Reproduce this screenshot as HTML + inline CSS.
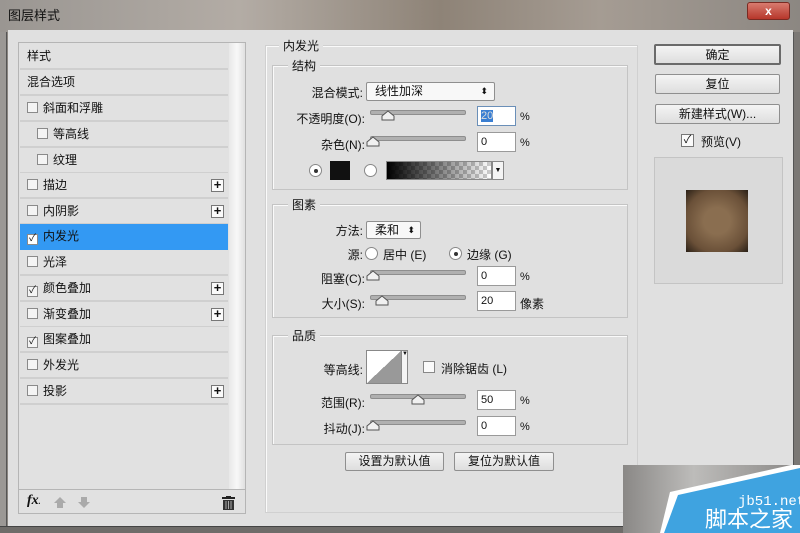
<!DOCTYPE html>
<html><head><meta charset="utf-8">
<style>
*{box-sizing:border-box;margin:0;padding:0}
body{width:800px;height:533px;overflow:hidden;position:relative;background:#8a8580;font-family:"Liberation Sans","Noto Sans CJK SC",sans-serif;font-size:12px;color:#111}
.a{position:absolute}
.row{position:absolute;left:20px;width:208px;height:26px;border-bottom:2px solid #cfcfcf;line-height:24px;padding-left:7px;font-size:12px;background:#e1e1e1}
.cb{display:inline-block;width:11px;height:11px;border:1px solid #8a8a8a;background:#f4f4f4;vertical-align:-1px;margin-right:5px;font-size:10px;line-height:8px;text-align:center}
.plus{position:absolute;right:4px;top:6px;width:13px;height:13px;border:1px solid #777;background:#fafafa;font-size:13px;line-height:10px;text-align:center;font-weight:bold}
.grp{position:absolute;border:1px solid #c4c4c4;box-shadow:1px 1px 0 #fafafa inset}
.lg{position:absolute;background:#e0e0e0;padding:0 4px;font-size:12px}
.lbl{position:absolute;text-align:right;font-size:12px}
.inp{position:absolute;width:39px;height:20px;background:#fff;border:1px solid #9a9a9a;font-size:11px;line-height:18px;padding-left:3px}
.trk{position:absolute;width:96px;height:5px;background:#b0b0b0;border:1px solid #8e8e8e;border-radius:2px}
.th{position:absolute}
.btn{position:absolute;border:1px solid #8f8f8f;background:linear-gradient(#f4f4f4,#dedede);text-align:center;font-size:12px;border-radius:2px}
.pct{position:absolute;font-size:11px}
</style></head><body>
<div class="a" style="left:0;top:0;width:800px;height:32px;background:linear-gradient(90deg,#9a9692 0%,#b3aca5 30%,#8e8377 55%,#a59c93 75%,#8c8782 100%)"></div>
<div class="a" style="left:8px;top:5px;font-size:13px;color:#111">图层样式</div>
<div class="a" style="left:747px;top:2px;width:43px;height:18px;background:linear-gradient(#d87b6f,#b7372b);border:1px solid #7a2a22;border-radius:3px;color:#fff;text-align:center;font-weight:bold;line-height:16px;font-size:12px">x</div>
<div class="a" style="left:0;top:32px;width:7px;height:501px;background:#9b9895;border-right:1px solid #555"></div>
<div class="a" style="left:793px;top:32px;width:7px;height:501px;background:#7b7875;border-left:1px solid #555"></div>
<div class="a" style="left:8px;top:30px;width:785px;height:496px;background:#e0e0e0"></div>
<div class="a" style="left:0;top:526px;width:800px;height:7px;background:#6f6c69;border-top:1px solid #444"></div>

<div class="a" style="left:18px;top:42px;width:228px;height:472px;border:1px solid #b5b5b5;background:#e1e1e1"></div>
<div class="a" style="left:229px;top:43px;width:16px;height:446px;background:linear-gradient(90deg,#e8e8e8,#f8f8f8,#e0e0e0)"></div>
<div class="row" style="top:44px">样式</div>
<div class="row" style="top:70px">混合选项</div>
<div class="row" style="top:96px"><span class="cb"></span>斜面和浮雕</div>
<div class="row" style="top:122px;padding-left:17px"><span class="cb"></span>等高线</div>
<div class="row" style="top:148px;padding-left:17px"><span class="cb"></span>纹理</div>
<div class="row" style="top:173px"><span class="cb"></span>描边<span class="plus">+</span></div>
<div class="row" style="top:199px"><span class="cb"></span>内阴影<span class="plus">+</span></div>
<div class="row" style="top:224px;background:#3399f3;border-bottom-color:#3399f3"><span class="cb" style="background:#fff">✓</span>内发光</div>
<div class="row" style="top:250px"><span class="cb"></span>光泽</div>
<div class="row" style="top:276px"><span class="cb">✓</span>颜色叠加<span class="plus">+</span></div>
<div class="row" style="top:302px"><span class="cb"></span>渐变叠加<span class="plus">+</span></div>
<div class="row" style="top:327px"><span class="cb">✓</span>图案叠加</div>
<div class="row" style="top:353px"><span class="cb"></span>外发光</div>
<div class="row" style="top:379px"><span class="cb"></span>投影<span class="plus">+</span></div>
<div class="a" style="left:19px;top:489px;width:226px;height:1px;background:#b5b5b5"></div>
<div class="a" style="left:27px;top:493px;font-style:italic;font-weight:bold;font-family:'Liberation Serif',serif;font-size:14px">fx<span style="font-size:8px">.</span></div>
<div class="a" style="left:54px;top:497px;width:0;height:0;border:6px solid transparent;border-bottom-color:#aaa;border-top:0"></div>
<div class="a" style="left:57px;top:503px;width:6px;height:5px;background:#aaa"></div>
<div class="a" style="left:81px;top:497px;width:6px;height:5px;background:#aaa"></div>
<div class="a" style="left:78px;top:502px;width:0;height:0;border:6px solid transparent;border-top-color:#aaa;border-bottom:0"></div>
<svg class="a" style="left:222px;top:496px" width="13" height="14"><rect x="0" y="1" width="13" height="2" fill="#222"/><rect x="4" y="0" width="5" height="2" fill="#222"/><rect x="1" y="4" width="11" height="10" fill="#333"/><path d="M4 5v8M6.5 5v8M9 5v8" stroke="#aaa"/></svg>

<div class="grp" style="left:265px;top:45px;width:373px;height:468px;border-color:#d0d0d0"></div>
<div class="lg" style="left:279px;top:37px">内发光</div>
<div class="grp" style="left:272px;top:65px;width:356px;height:125px"></div>
<div class="lg" style="left:288px;top:57px">结构</div>
<div class="lbl" style="left:280px;width:83px;top:84px">混合模式:</div>
<div class="btn" style="left:366px;top:82px;width:129px;height:19px;background:#f8f8f8;text-align:left;padding-left:8px;line-height:17px">线性加深<span style="position:absolute;right:6px;font-size:9px">⬍</span></div>
<div class="lbl" style="left:280px;width:85px;top:110px">不透明度(O):</div>
<div class="trk" style="left:370px;top:110px"></div>
<svg class="th" style="left:381px;top:110px" width="14" height="11"><path d="M1 10V6L7 1L13 6V10Z" fill="#f0f0f0" stroke="#555"/></svg>
<div class="inp" style="left:477px;top:106px;border-color:#6a8fb8"><span style="background:#3a7fd2;color:#ddd">20</span></div>
<div class="pct" style="left:520px;top:111px">%</div>
<div class="lbl" style="left:280px;width:85px;top:136px">杂色(N):</div>
<div class="trk" style="left:370px;top:136px"></div>
<svg class="th" style="left:366px;top:136px" width="14" height="11"><path d="M1 10V6L7 1L13 6V10Z" fill="#f0f0f0" stroke="#555"/></svg>
<div class="inp" style="left:477px;top:132px">0</div>
<div class="pct" style="left:520px;top:137px">%</div>
<div class="a" style="left:309px;top:164px;width:13px;height:13px;border:1px solid #888;border-radius:50%;background:#fff"></div>
<div class="a" style="left:314px;top:169px;width:4px;height:4px;border-radius:50%;background:#333"></div>
<div class="a" style="left:330px;top:161px;width:20px;height:19px;background:#111"></div>
<div class="a" style="left:364px;top:164px;width:13px;height:13px;border:1px solid #888;border-radius:50%;background:#fff"></div>
<div class="a" style="left:386px;top:161px;width:106px;height:19px;border:1px solid #888;background:linear-gradient(90deg,#000,rgba(0,0,0,0)),repeating-conic-gradient(#ccc 0 25%,#fff 0 50%) 0 0/8px 8px"></div>
<div class="a" style="left:492px;top:161px;width:12px;height:19px;border:1px solid #888;background:#f4f4f4;font-size:7px;text-align:center;line-height:17px">▼</div>

<div class="grp" style="left:272px;top:204px;width:356px;height:114px"></div>
<div class="lg" style="left:288px;top:196px">图素</div>
<div class="lbl" style="left:280px;width:83px;top:222px">方法:</div>
<div class="btn" style="left:366px;top:221px;width:55px;height:18px;background:#f8f8f8;text-align:left;padding-left:8px;line-height:16px">柔和<span style="position:absolute;right:5px;font-size:9px">⬍</span></div>
<div class="lbl" style="left:280px;width:83px;top:246px">源:</div>
<div class="a" style="left:365px;top:247px;width:13px;height:13px;border:1px solid #888;border-radius:50%;background:#fff"></div>
<div class="a" style="left:383px;top:246px">居中 (E)</div>
<div class="a" style="left:449px;top:247px;width:13px;height:13px;border:1px solid #888;border-radius:50%;background:#fff"></div>
<div class="a" style="left:454px;top:252px;width:4px;height:4px;border-radius:50%;background:#333"></div>
<div class="a" style="left:467px;top:246px">边缘 (G)</div>
<div class="lbl" style="left:280px;width:85px;top:270px">阻塞(C):</div>
<div class="trk" style="left:370px;top:270px"></div>
<svg class="th" style="left:366px;top:270px" width="14" height="11"><path d="M1 10V6L7 1L13 6V10Z" fill="#f0f0f0" stroke="#555"/></svg>
<div class="inp" style="left:477px;top:266px">0</div>
<div class="pct" style="left:520px;top:271px">%</div>
<div class="lbl" style="left:280px;width:85px;top:295px">大小(S):</div>
<div class="trk" style="left:370px;top:295px"></div>
<svg class="th" style="left:375px;top:295px" width="14" height="11"><path d="M1 10V6L7 1L13 6V10Z" fill="#f0f0f0" stroke="#555"/></svg>
<div class="inp" style="left:477px;top:291px">20</div>
<div class="a" style="left:520px;top:295px">像素</div>

<div class="grp" style="left:272px;top:335px;width:356px;height:110px"></div>
<div class="lg" style="left:288px;top:327px">品质</div>
<div class="lbl" style="left:280px;width:83px;top:361px">等高线:</div>
<div class="a" style="left:366px;top:350px;width:36px;height:34px;border:1px solid #888;background:linear-gradient(to bottom right,#fff 50%,#999 50%)"></div>
<div class="a" style="left:401px;top:350px;width:7px;height:34px;border:1px solid #888;background:#f4f4f4;font-size:6px">▼</div>
<div class="a" style="left:423px;top:361px;width:12px;height:12px;border:1px solid #888;background:#fafafa"></div>
<div class="a" style="left:441px;top:360px">消除锯齿 (L)</div>
<div class="lbl" style="left:280px;width:85px;top:394px">范围(R):</div>
<div class="trk" style="left:370px;top:394px"></div>
<svg class="th" style="left:411px;top:394px" width="14" height="11"><path d="M1 10V6L7 1L13 6V10Z" fill="#f0f0f0" stroke="#555"/></svg>
<div class="inp" style="left:477px;top:390px">50</div>
<div class="pct" style="left:520px;top:395px">%</div>
<div class="lbl" style="left:280px;width:85px;top:420px">抖动(J):</div>
<div class="trk" style="left:370px;top:420px"></div>
<svg class="th" style="left:366px;top:420px" width="14" height="11"><path d="M1 10V6L7 1L13 6V10Z" fill="#f0f0f0" stroke="#555"/></svg>
<div class="inp" style="left:477px;top:416px">0</div>
<div class="pct" style="left:520px;top:421px">%</div>
<div class="btn" style="left:345px;top:452px;width:99px;height:19px;line-height:17px">设置为默认值</div>
<div class="btn" style="left:454px;top:452px;width:100px;height:19px;line-height:17px">复位为默认值</div>

<div class="btn" style="left:654px;top:44px;width:127px;height:21px;line-height:19px;border:2px solid #6a6a6a">确定</div>
<div class="btn" style="left:655px;top:74px;width:125px;height:20px;line-height:18px">复位</div>
<div class="btn" style="left:655px;top:104px;width:125px;height:20px;line-height:18px">新建样式(W)...</div>
<div class="a" style="left:681px;top:134px;width:13px;height:13px;border:1px solid #777;background:#fafafa;font-size:11px;line-height:11px;text-align:center">✓</div>
<div class="a" style="left:701px;top:133px">预览(V)</div>
<div class="a" style="left:654px;top:157px;width:129px;height:127px;border:1px solid #c4c4c4;background:#dadada"></div>
<div class="a" style="left:686px;top:190px;width:62px;height:62px;background:radial-gradient(#8a6e50 30%,#6a5038 72%,#2a2016 100%)"></div>

<div class="a" style="left:623px;top:465px;width:177px;height:68px;background:linear-gradient(90deg,#8a8886,#bdbcba 40%,#8a8886)"></div>
<svg class="a" style="left:623px;top:465px" width="177" height="68"><polygon points="37,68 47,27 177,-2 177,68" fill="#fff"/><polygon points="41,68 55,30 177,3 177,68" fill="#3fa3e0"/></svg>
<div class="a" style="left:738px;top:494px;color:#fff;font-size:14px;font-family:'Liberation Mono',monospace">jb51.net</div>
<div class="a" style="left:705px;top:508px;color:#fff;font-size:22px;line-height:24px">脚本之家</div>
</body></html>
